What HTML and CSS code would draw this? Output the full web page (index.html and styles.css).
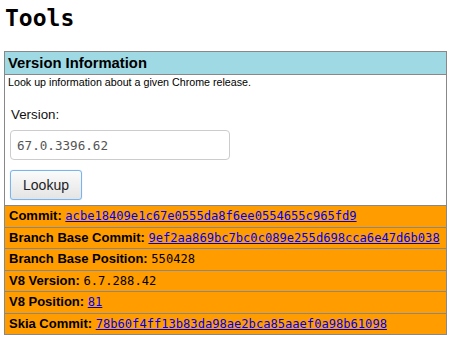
FILE: index.html
```html
<html>
<head>
    <meta charset="utf-8">
    <meta name="viewport" content="width=device-width, initial-scale=1.0">
    <title>Tools</title>
    <link rel="stylesheet" href="styles.css">
</head>
<body>
    <h1 class="title">Tools</h1>
    <div class="panel">
        <div class="panel-head">Version Information</div>
        <div class="panel-body">
            <p class="desc">Look up information about a given Chrome release.</p>
            <form class="lookup">
                <label class="lookup-label" for="version">Version:</label>
                <input class="lookup-input" id="version" type="text" value="67.0.3396.62">
                <button class="lookup-btn" type="button">Lookup</button>
            </form>
        </div>
        <div class="info">
            <div class="row"><b>Commit:</b> <a class="val" href="#">acbe18409e1c67e0555da8f6ee0554655c965fd9</a></div>
            <div class="row"><b>Branch Base Commit:</b> <a class="val" href="#">9ef2aa869bc7bc0c089e255d698cca6e47d6b038</a></div>
            <div class="row"><b>Branch Base Position:</b> <span class="val">550428</span></div>
            <div class="row"><b>V8 Version:</b> <span class="val">6.7.288.42</span></div>
            <div class="row"><b>V8 Position:</b> <a class="val" href="#">81</a></div>
            <div class="row"><b>Skia Commit:</b> <a class="val" href="#">78b60f4ff13b83da98ae2bca85aaef0a98b61098</a></div>
        </div>
    </div>
</body>
</html>
```

FILE: styles.css
```css
* {
    margin: 0;
    padding: 0;
    box-sizing: border-box;
}
body {
    margin: 4px 7px 0 4px;
    font-family: "Liberation Sans", Arial, sans-serif;
    color: #000;
    background-color: #fff;
}
.title {
    font-family: "DejaVu Sans Mono", monospace;
    font-size: 23px;
    font-weight: bold;
    line-height: 28px;
    padding-left: 1px;
    margin-bottom: 19px;
}
.panel {
    border: 1px solid #888;
}
.panel-head {
    background-color: #9fdae4;
    border-bottom: 1px solid #888;
    font-size: 14.8px;
    font-weight: bold;
    line-height: 22px;
    padding-left: 3px;
}
.panel-body {
    padding: 1px 3px 5px 3px;
}
.desc {
    font-size: 10.7px;
    line-height: 13px;
}
.lookup {
    display: flex;
    flex-direction: column;
    align-items: flex-start;
    padding: 18px 0 0 2px;
}
.lookup-label {
    font-size: 13.33px;
    line-height: 16px;
    padding-left: 1px;
    color: #111;
}
.lookup-input {
    margin-top: 7px;
    width: 220px;
    height: 30px;
    border: 1px solid #ccc;
    border-radius: 4px;
    padding: 0 6px;
    font-family: "DejaVu Sans Mono", monospace;
    font-size: 12.6px;
    color: #555;
    background-color: #fff;
}
.lookup-btn {
    margin-top: 10px;
    width: 72px;
    height: 30px;
    border: 1px solid #7ab4ec;
    border-radius: 3px;
    background: linear-gradient(#fbfbfb, #e4e4e4);
    font-family: "Liberation Sans", Arial, sans-serif;
    font-size: 14px;
    color: #222;
    box-shadow: 0 0 1px #9cc9f3;
}
.info {
    background-color: #ff9c00;
}
.row {
    border-top: 1px solid #888;
    height: 21.5px;
    line-height: 20.5px;
    padding-left: 4px;
    font-size: 13px;
    white-space: nowrap;
}
.val {
    font-family: "DejaVu Sans Mono", monospace;
    font-size: 12.1px;
}
a.val {
    color: #0000ee;
}
```
